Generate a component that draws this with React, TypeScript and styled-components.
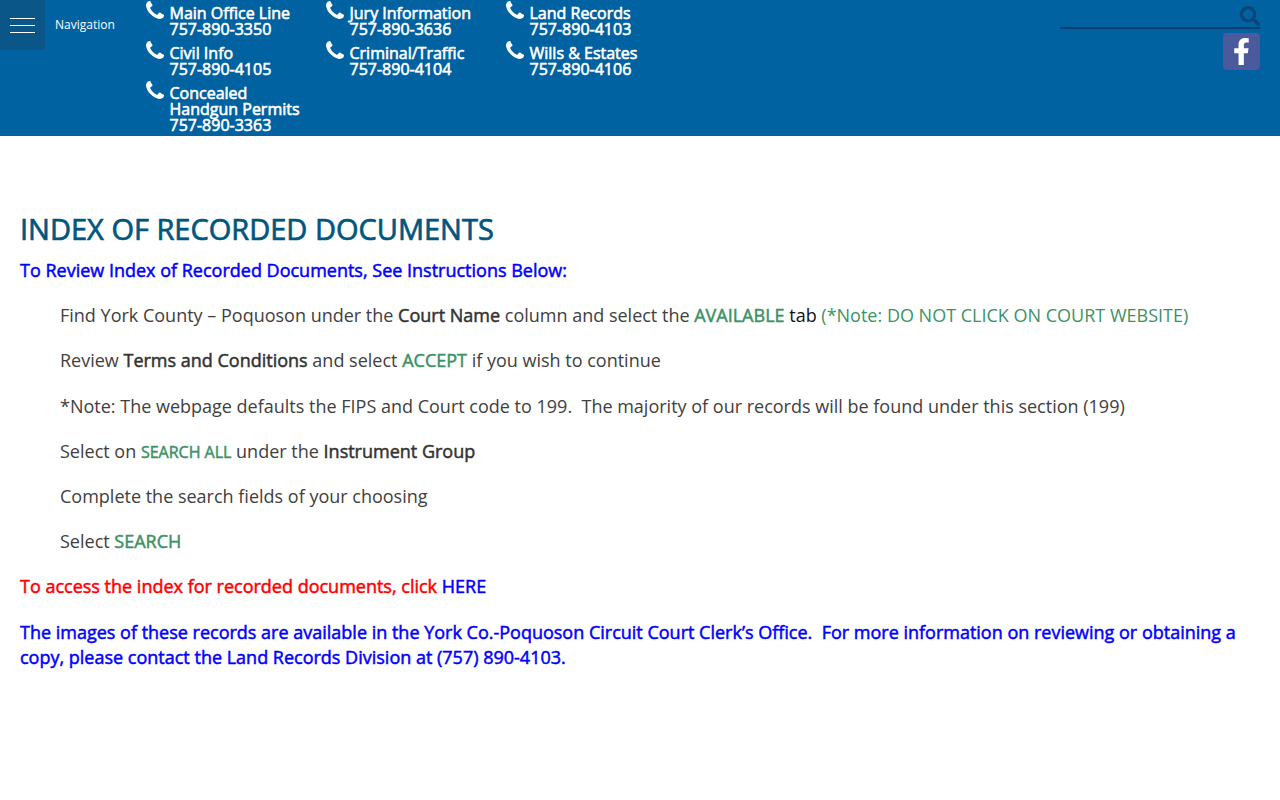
import styled, { createGlobalStyle } from "styled-components";
import { FaFacebookF, FaSearch } from "react-icons/fa";

const GlobalStyle = createGlobalStyle`
  html, body {
    margin: 0;
    background: #fff;
    font-family: "Open Sans", "Liberation Sans", sans-serif;
  }
`;

const contacts = [
  [
    { label: ["Main Office Line"], phone: "757-890-3350" },
    { label: ["Civil Info"], phone: "757-890-4105" },
    { label: ["Concealed", "Handgun Permits"], phone: "757-890-3363" },
  ],
  [
    { label: ["Jury Information"], phone: "757-890-3636" },
    { label: ["Criminal/Traffic"], phone: "757-890-4104" },
  ],
  [
    { label: ["Land Records"], phone: "757-890-4103" },
    { label: ["Wills & Estates"], phone: "757-890-4106" },
  ],
];

const App = () => {
  return (
    <>
      <GlobalStyle />
      <Header>
        <MenuButton aria-label="Navigation">
          <MenuLine />
          <MenuLine />
          <MenuLine />
        </MenuButton>
        <NavLabel>Navigation</NavLabel>
        <Contacts>
          {contacts.map((column, i) => (
            <ContactColumn key={i}>
              {column.map((item) => (
                <Contact key={item.phone}>
                  <PhoneIcon viewBox="0 128 1408 1408">
                    <path d="M1408 1240q0 27-10 70.5t-21 68.5q-21 50-122 106-94 51-186 51-27 0-53-3.5t-57.5-12.5-47-14.5-55.5-20.5-49-18q-98-35-175-83-127-79-264-216t-216-264q-48-77-83-175-3-9-18-49t-20.5-55.5-14.5-47-12.5-57.5-3.5-53q0-92 51-186 56-101 106-122 25-11 68.5-21t70.5-10q14 0 21 3 18 6 53 76 11 19 30 54t35 63.5 31 53.5q3 4 17.5 25t21.5 35.5 7 28.5q0 20-28.5 50t-62 55-62 53-28.5 46q0 9 5 22.5t8.5 20.5 14 24 11.5 19q76 137 174 235t235 174q2 1 19 11.5t24 14 20.5 8.5 22.5 5q18 0 46-28.5t53-62 55-62 50-28.5q14 0 28.5 7t35.5 21.5 25 17.5q25 15 53.5 31t63.5 35 54 30q70 35 76 53 3 7 3 21z" />
                  </PhoneIcon>
                  <ContactText>
                    {item.label.map((line) => (
                      <div key={line}>{line}</div>
                    ))}
                    <div>{item.phone}</div>
                  </ContactText>
                </Contact>
              ))}
            </ContactColumn>
          ))}
        </Contacts>
        <HeaderRight>
          <SearchBar>
            <FaSearch />
          </SearchBar>
          <FacebookLink href="#">
            <FaFacebookF />
          </FacebookLink>
        </HeaderRight>
      </Header>
      <Main>
        <Title>INDEX OF RECORDED DOCUMENTS</Title>
        <Lead>To Review Index of Recorded Documents, See Instructions Below:</Lead>
        <Steps>
          <Step>
            Find York County – Poquoson under the <Strong>Court Name</Strong> column and
            select the <Green $bold>AVAILABLE</Green> <Dark>tab</Dark>{" "}
            <Green>(*Note: DO NOT CLICK ON COURT WEBSITE)</Green>
          </Step>
          <Step>
            Review <Strong>Terms and Conditions</Strong> and select{" "}
            <Green $bold>ACCEPT</Green> if you wish to continue
          </Step>
          <Step>
            *Note: The webpage defaults the FIPS and Court code to 199.&nbsp; The majority
            of our records will be found under this section (199)
          </Step>
          <Step>
            Select on <SmallGreen>SEARCH ALL</SmallGreen> under the{" "}
            <Strong>Instrument Group</Strong>
          </Step>
          <Step>Complete the search fields of your choosing</Step>
          <Step>
            Select <Green $bold>SEARCH</Green>
          </Step>
        </Steps>
        <Notice $color="#f00">
          To access the index for recorded documents, click{" "}
          <HereLink href="#">HERE</HereLink>
        </Notice>
        <Notice $color="#00f">
          The images of these records are available in the York Co.-Poquoson Circuit Court
          Clerk’s Office.&nbsp; For more information on reviewing or obtaining a copy,
          please contact the Land Records Division at (757) 890-4103.
        </Notice>
      </Main>
    </>
  );
};

const Header = styled.header`
  display: flex;
  height: 136px;
  background: #0062a0;
  color: #fff;
  overflow: hidden;
`;

const MenuButton = styled.button`
  display: flex;
  flex-direction: column;
  justify-content: center;
  gap: 6px;
  flex: none;
  width: 45px;
  height: 50px;
  padding: 0 10px;
  border: 0;
  background: #0b5688;
`;

const MenuLine = styled.span`
  display: block;
  height: 1px;
  background: #fff;
`;

const NavLabel = styled.div`
  flex: none;
  width: 101px;
  padding-left: 10px;
  box-sizing: border-box;
  font-size: 12px;
  line-height: 49px;
`;

const Contacts = styled.div`
  display: flex;
`;

const ContactColumn = styled.div`
  display: flex;
  flex-direction: column;
  gap: 8px;
  width: 180px;
  padding-top: 5px;
`;

const Contact = styled.div`
  display: flex;
  align-items: flex-start;
`;

const PhoneIcon = styled.svg`
  flex: none;
  width: 18px;
  height: 18px;
  margin-top: -4px;
  margin-right: 5.5px;
  fill: #fff;
`;

const ContactText = styled.div`
  font-size: 16px;
  line-height: 16px;
  -webkit-text-stroke: 0.6px #fff;
`;

const HeaderRight = styled.div`
  display: flex;
  flex-direction: column;
  align-items: flex-end;
  width: 200px;
  margin-left: auto;
  margin-right: 20px;
`;

const SearchBar = styled.div`
  display: flex;
  justify-content: flex-end;
  align-items: center;
  box-sizing: border-box;
  width: 100%;
  height: 29px;
  border-bottom: 2px solid #0a3f72;
  color: #0a4576;
  font-size: 20px;
  padding-top: 5px;
`;

const FacebookLink = styled.a`
  display: flex;
  align-items: center;
  justify-content: center;
  width: 37px;
  height: 37px;
  margin-top: 4px;
  border-radius: 4px;
  background: #4a5a9c;
  color: #fff;
  font-size: 27px;
`;

const Main = styled.main`
  padding: 74px 20px 0;
`;

const Title = styled.h1`
  margin: 0 0 10px;
  color: #00567f;
  font-size: 29px;
  font-weight: 400;
  line-height: 38px;
  -webkit-text-stroke: 0.7px #00567f;
`;

const Lead = styled.p`
  margin: 0 0 20px;
  color: #00f;
  font-size: 18px;
  line-height: 25.2px;
  -webkit-text-stroke: 0.5px #00f;
`;

const Steps = styled.div`
  margin-left: 40px;
`;

const Step = styled.p`
  margin: 0 0 20px;
  color: #404040;
  font-size: 18px;
  line-height: 25.2px;
`;

const Strong = styled.span`
  color: #333;
  -webkit-text-stroke: 0.5px #333;
`;

const Dark = styled.span`
  color: #111;
`;

const Green = styled.span<{ $bold?: boolean }>`
  color: #3c9264;
  -webkit-text-stroke: ${({ $bold }) => ($bold ? "0.5px #3c9264" : "0")};
`;

const SmallGreen = styled(Green).attrs({ $bold: true })`
  font-size: 16px;
  line-height: 1;
`;

const Notice = styled.p<{ $color: string }>`
  margin: 0 0 20px;
  color: ${({ $color }) => $color};
  font-size: 18px;
  line-height: 25.2px;
  -webkit-text-stroke: 0.5px ${({ $color }) => $color};
`;

const HereLink = styled.a`
  color: #00f;
  text-decoration: none;
  -webkit-text-stroke: 0.5px #00f;
`;

export default App;
